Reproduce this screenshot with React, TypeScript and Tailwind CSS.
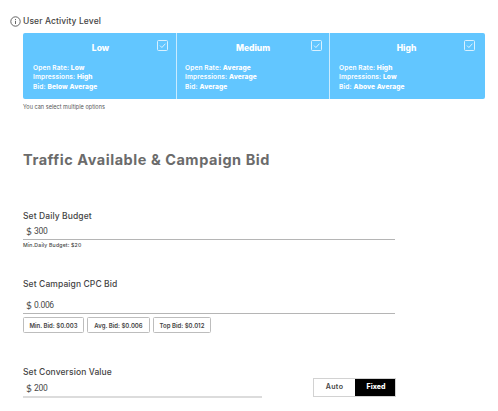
import type { ReactNode } from "react"

const levels = [
  { name: "Low", openRate: "Low", impressions: "High", bid: "Below Average", width: "w-[154px]", title: "pl-[2px]", check: "right-[8px]", list: "pl-[10px]" },
  { name: "Medium", openRate: "Average", impressions: "Average", bid: "Average", width: "w-[153px]", title: "pl-0", check: "right-[7px]", list: "pl-[8px]" },
  { name: "High", openRate: "High", impressions: "Low", bid: "Above Average", width: "w-[155px]", title: "pr-[2px]", check: "right-[10px]", list: "pl-[9px]" },
]

const bids = [
  { label: "Min. Bid: $0.003", width: "w-[61px]" },
  { label: "Avg. Bid: $0.006", width: "w-[63px]" },
  { label: "Top Bid: $0.012", width: "w-[58px]" },
]

function InfoIcon() {
  return (
    <svg width="11" height="11" viewBox="0 0 11 11" fill="none" stroke="#555" strokeWidth="0.9">
      <circle cx="5.5" cy="5.5" r="4.7" />
      <path d="M5.5 4.8V8M5.5 3V4" />
    </svg>
  )
}

function CheckBox({ className }: { className: string }) {
  return (
    <svg className={`absolute top-[7px] ${className}`} width="11" height="11" viewBox="0 0 11 11" fill="none" stroke="#e6f6ff" strokeWidth="0.9">
      <rect x="0.5" y="0.5" width="10" height="10" rx="1" />
      <path d="M3 5.6L4.9 7.5L8.4 3.7" />
    </svg>
  )
}

function Label({ children }: { children: ReactNode }) {
  return <h3 className="h-[12px] text-[8.5px] leading-[12px] font-medium tracking-[0.1px] text-[#444]">{children}</h3>
}

function Amount({ value }: { value: string }) {
  return (
    <div className="flex h-[12px] items-center pl-[3px] leading-[12px] text-[#484848]">
      <span className="w-[8px] font-['Lato'] text-[10px]">$</span>
      <span className="font-['Roboto'] text-[8.5px] tracking-[-0.3px]">{value}</span>
    </div>
  )
}

export default function App() {
  return (
    <main className="h-[411px] w-[498px] overflow-hidden bg-white pl-[23px] pt-[15px] font-['Inter',sans-serif] whitespace-nowrap">
      <div className="-ml-[13px] flex h-[12px] items-center gap-[2px]">
        <InfoIcon />
        <Label>User Activity Level</Label>
      </div>

      <section className="mt-[6px] flex h-[66px] w-[462px] divide-x divide-[#c9ebff] rounded-[2px] bg-[#62c6ff] text-white">
        {levels.map((level) => (
          <div key={level.name} className={`relative ${level.width}`}>
            <h4 className={`mt-[9px] text-center text-[8.5px] leading-[12px] font-extrabold ${level.title}`}>{level.name}</h4>
            <CheckBox className={level.check} />
            <ul className={`mt-[10px] text-[6.6px] leading-[9.4px] font-semibold tracking-[0.1px] ${level.list}`}>
              <li>Open Rate: <b className="font-extrabold">{level.openRate}</b></li>
              <li>Impressions: <b className="font-extrabold">{level.impressions}</b></li>
              <li>Bid: <b className="font-extrabold">{level.bid}</b></li>
            </ul>
          </div>
        ))}
      </section>
      <p className="mt-[4px] h-[9px] text-[5.5px] leading-[9px] tracking-[0.03px] text-[#555]">You can select multiple options</p>

      <h2 className="mt-[38px] h-[20px] text-[14.5px] leading-[20px] font-bold tracking-[0.54px] text-[#6b6b6b]">
        Traffic Available &amp; Campaign Bid
      </h2>

      <section className="mt-[40px] w-[372px]">
        <Label>Set Daily Budget</Label>
        <div className="mt-[3px] h-[15px] border-b border-[#b5b5b5]">
          <Amount value="300" />
        </div>
        <p className="mt-[1px] h-[8px] text-[5.2px] leading-[8px] font-medium tracking-[0.16px] text-[#444]">Min.Daily Budget: $20</p>
      </section>

      <section className="mt-[29px] w-[372px]">
        <Label>Set Campaign CPC Bid</Label>
        <div className="mt-[9px] h-[15px] border-b border-[#b5b5b5]">
          <Amount value="0.006" />
        </div>
        <div className="mt-[3px] flex gap-[3px]">
          {bids.map((bid) => (
            <button key={bid.label} className={`h-[16px] rounded-[1.5px] border border-[#bdbdbd] text-[6px] font-semibold text-[#444] ${bid.width}`}>
              {bid.label}
            </button>
          ))}
        </div>
      </section>

      <section className="mt-[33px] flex w-[373px] justify-between">
        <div className="w-[239px]">
          <Label>Set Conversion Value</Label>
          <div className="mt-[4px] h-[16px] border-b-2 border-[#dcdcdc]">
            <Amount value="200" />
          </div>
        </div>
        <div className="mt-[12px] flex h-[19px] w-[83px] text-[7px]">
          <button className="w-[42px] border border-r-0 border-[#d2d2d2] font-semibold tracking-[0.4px] text-[#444]">Auto</button>
          <button className="w-[41px] border-y border-r border-[#d2d2d2] bg-black pl-[2px] font-extrabold text-white">Fixed</button>
        </div>
      </section>
    </main>
  )
}
